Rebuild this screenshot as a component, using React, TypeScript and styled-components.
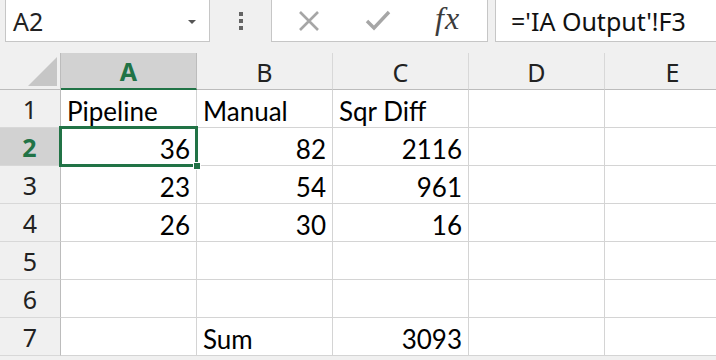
import React from 'react';
import styled, { createGlobalStyle } from 'styled-components';

const GREEN = '#217346';
const GRID = '#d4d4d4';

const GlobalStyle = createGlobalStyle`
    html, body {
        margin: 0;
        padding: 0;
        background: #ffffff;
        overflow: hidden;
    }
    body {
        width: 716px;
        height: 360px;
        font-family: "Noto Sans", "Open Sans", sans-serif;
    }
`;

const columns = ['A', 'B', 'C', 'D', 'E'];

type Cell = { text: string; align?: 'left' | 'right' };

const rows: Cell[][] = [
    [{ text: 'Pipeline' }, { text: 'Manual' }, { text: 'Sqr Diff' }, { text: '' }, { text: '' }],
    [{ text: '36', align: 'right' }, { text: '82', align: 'right' }, { text: '2116', align: 'right' }, { text: '' }, { text: '' }],
    [{ text: '23', align: 'right' }, { text: '54', align: 'right' }, { text: '961', align: 'right' }, { text: '' }, { text: '' }],
    [{ text: '26', align: 'right' }, { text: '30', align: 'right' }, { text: '16', align: 'right' }, { text: '' }, { text: '' }],
    [{ text: '' }, { text: '' }, { text: '' }, { text: '' }, { text: '' }],
    [{ text: '' }, { text: '' }, { text: '' }, { text: '' }, { text: '' }],
    [{ text: '' }, { text: 'Sum' }, { text: '3093', align: 'right' }, { text: '' }, { text: '' }],
];

const Page = styled.div`
    width: 716px;
    height: 360px;
    background: #f0f0f0;
    display: flex;
    flex-direction: column;
`;

const FormulaBar = styled.div`
    display: flex;
    align-items: stretch;
    height: 43px;
    margin-top: -1px;
    margin-bottom: 11px;
    padding-left: 5px;
`;

const NameBox = styled.div`
    width: 205px;
    box-sizing: border-box;
    background: #ffffff;
    border: 1px solid #c6c6c6;
    display: flex;
    align-items: center;
    justify-content: space-between;
    padding: 0 13px 0 7px;
    font-size: 25px;
    color: #222;
`;

const Caret = styled.span`
    width: 0;
    height: 0;
    border-left: 4px solid transparent;
    border-right: 4px solid transparent;
    border-top: 4px solid #555;
    margin-top: 2px;
`;

const Grip = styled.div`
    width: 61px;
    display: flex;
    flex-direction: column;
    align-items: center;
    justify-content: center;
    gap: 3px;
    padding-top: 1px;

    span {
        width: 4px;
        height: 4px;
        background: #646464;
    }
`;

const ButtonBox = styled.div`
    width: 217px;
    box-sizing: border-box;
    background: #ffffff;
    border: 1px solid #c6c6c6;
    display: flex;
    align-items: center;
    padding-left: 25px;
`;

const IconButton = styled.div<{ $w: number }>`
    width: ${(p) => p.$w}px;
    display: flex;
    align-items: center;
`;

const Fx = styled.span`
    font-family: "Liberation Serif", "DejaVu Serif", serif;
    font-style: italic;
    font-size: 32px;
    color: #3c3c3c;
    letter-spacing: 1px;
    margin-top: -4px;
`;

const FormulaInput = styled.div`
    flex: 1;
    margin-left: 7px;
    margin-right: -4px;
    background: #ffffff;
    border: 1px solid #c6c6c6;
    display: flex;
    align-items: center;
    padding-left: 15px;
    font-size: 25px;
    color: #111;
    white-space: nowrap;
`;

const Sheet = styled.div`
    display: grid;
    grid-template-columns: 61px repeat(5, 136px);
    grid-template-rows: 37px repeat(7, 38px);
    flex: 1;
    overflow: hidden;
`;

const Corner = styled.div`
    background: #f0f0f0;
    border-right: 1px solid #bcbcbc;
    border-bottom: 1px solid #bcbcbc;
    position: relative;

    &::after {
        content: '';
        position: absolute;
        right: 3px;
        bottom: 3px;
        width: 0;
        height: 0;
        border-left: 29px solid transparent;
        border-bottom: 29px solid #c6c6c6;
    }
`;

const ColHeader = styled.div<{ $selected?: boolean }>`
    background: ${(p) => (p.$selected ? '#d2d2d2' : '#f0f0f0')};
    border-bottom: ${(p) => (p.$selected ? `2px solid ${GREEN}` : '1px solid #bcbcbc')};
    border-right: 1px solid ${(p) => (p.$selected ? '#bcbcbc' : '#d8d8d8')};
    display: flex;
    align-items: center;
    justify-content: center;
    font-size: 25px;
    font-weight: ${(p) => (p.$selected ? 700 : 400)};
    color: ${(p) => (p.$selected ? GREEN : '#222')};
    padding-top: 1px;
`;

const RowHeader = styled.div<{ $selected?: boolean }>`
    background: ${(p) => (p.$selected ? '#d2d2d2' : '#f0f0f0')};
    border-right: ${(p) => (p.$selected ? `2px solid ${GREEN}` : '1px solid #bcbcbc')};
    border-bottom: 1px solid #d8d8d8;
    display: flex;
    align-items: center;
    justify-content: center;
    font-size: 25px;
    font-weight: ${(p) => (p.$selected ? 700 : 400)};
    color: ${(p) => (p.$selected ? GREEN : '#222')};
`;

const CellBox = styled.div<{ $align?: 'left' | 'right'; $active?: boolean }>`
    background: #ffffff;
    border-right: 1px solid ${GRID};
    border-bottom: 1px solid ${GRID};
    display: flex;
    align-items: flex-end;
    justify-content: ${(p) => (p.$align === 'right' ? 'flex-end' : 'flex-start')};
    padding: 0 6px 1px 6px;
    font-family: Lato, "Open Sans", sans-serif;
    font-size: 26px;
    line-height: 30px;
    color: #000;
    white-space: nowrap;
    position: relative;
    overflow: visible;
    z-index: ${(p) => (p.$active ? 2 : 0)};
`;

const Selection = styled.div`
    position: absolute;
    left: -2px;
    top: -2px;
    right: -2px;
    bottom: -2px;
    border: 3px solid ${GREEN};
    pointer-events: none;

    &::after {
        content: '';
        position: absolute;
        right: -6px;
        bottom: -6px;
        width: 6px;
        height: 6px;
        background: ${GREEN};
        border: 1px solid #ffffff;
    }
`;

const CrossIcon = () => (
    <svg width="24" height="24" viewBox="0 0 24 24">
        <path d="M3 3 L21 21 M21 3 L3 21" stroke="#a6a6a6" strokeWidth="2.6" fill="none" />
    </svg>
);

const CheckIcon = () => (
    <svg width="26" height="22" viewBox="0 0 26 22">
        <path d="M2 11 L9 18 L24 2" stroke="#a6a6a6" strokeWidth="3.4" fill="none" />
    </svg>
);

export default function App() {
    return (
        <>
            <GlobalStyle />
            <Page>
                <FormulaBar>
                    <NameBox>
                        <span>A2</span>
                        <Caret />
                    </NameBox>
                    <Grip>
                        <span />
                        <span />
                        <span />
                    </Grip>
                    <ButtonBox>
                        <IconButton $w={68}><CrossIcon /></IconButton>
                        <IconButton $w={70}><CheckIcon /></IconButton>
                        <IconButton $w={40}><Fx>fx</Fx></IconButton>
                    </ButtonBox>
                    <FormulaInput>='IA Output'!F3</FormulaInput>
                </FormulaBar>
                <Sheet>
                    <Corner />
                    {columns.map((c) => (
                        <ColHeader key={c} $selected={c === 'A'}>{c}</ColHeader>
                    ))}
                    {rows.map((row, r) => (
                        <React.Fragment key={r}>
                            <RowHeader $selected={r === 1}>{r + 1}</RowHeader>
                            {row.map((cell, c) => {
                                const active = r === 1 && c === 0;
                                return (
                                    <CellBox key={c} $align={cell.align} $active={active}>
                                        {cell.text}
                                        {active && <Selection />}
                                    </CellBox>
                                );
                            })}
                        </React.Fragment>
                    ))}
                </Sheet>
            </Page>
        </>
    );
}
